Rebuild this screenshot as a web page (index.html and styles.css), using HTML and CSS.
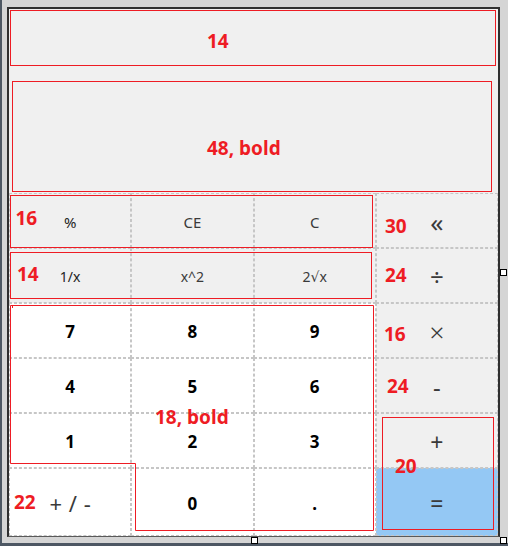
FILE: index.html
```html
<!DOCTYPE html>
<html>
<head>
<meta charset="utf-8">
<title>Calculator designer</title>
<link rel="stylesheet" href="styles.css">
</head>
<body>
<div class="screen">
  <div class="canvas">
    <div class="form">
      <div class="lbl lbl-expr">14</div>
      <div class="lbl lbl-result">48, bold</div>
      <div class="keys">
        <div class="key fn f16 dark">%</div>
        <div class="key fn f16">CE</div>
        <div class="key fn f16">C</div>
        <div class="key op back">«</div>

        <div class="key fn f14 dark">1/x</div>
        <div class="key fn f14">x^2</div>
        <div class="key fn f14">2√x</div>
        <div class="key op div">÷</div>

        <div class="key num">7</div>
        <div class="key num">8</div>
        <div class="key num">9</div>
        <div class="key op mul">×</div>

        <div class="key num">4</div>
        <div class="key num">5</div>
        <div class="key num">6</div>
        <div class="key op sub">-</div>

        <div class="key num">1</div>
        <div class="key num">2</div>
        <div class="key num">3</div>
        <div class="key op add">+</div>

        <div class="key sign">+ / -</div>
        <div class="key num">0</div>
        <div class="key num">.</div>
        <div class="key op eq">=</div>
      </div>
    </div>
  </div>
  <div class="bottom-bar"></div>

  <svg class="marks" width="508" height="546" viewBox="0 0 508 546">
    <rect x="10.5" y="195.5" width="362" height="52"/>
    <rect x="10.5" y="252.5" width="361" height="46"/>
    <path d="M10.5 305.5 H373.5 V530.5 H135.5 V463.5 H10.5 Z M12.5 305.5 V308"/>
    <rect x="382.5" y="417.5" width="111" height="112"/>
  </svg>

  <div class="ann a-r1">16</div>
  <div class="ann a-r2">14</div>
  <div class="ann a-back">30</div>
  <div class="ann a-div">24</div>
  <div class="ann a-mul">16</div>
  <div class="ann a-sub">24</div>
  <div class="ann a-num">18, bold</div>
  <div class="ann a-eq">20</div>
  <div class="ann a-sign">22</div>

  <div class="handle h-right"></div>
  <div class="handle h-bottom"></div>
  <div class="handle h-corner"></div>
</div>
</body>
</html>
```
FILE: styles.css
```css
* {
  box-sizing: border-box;
  margin: 0;
  padding: 0;
}

html, body {
  width: 508px;
  height: 546px;
  overflow: hidden;
}

body {
  background: #d5d5d5;
  font-family: "Noto Sans", "DejaVu Sans", sans-serif;
}

.screen {
  position: relative;
  width: 508px;
  height: 546px;
  display: flex;
  flex-direction: column;
  border-left: 2px solid #4d5763;
  background: #d5d5d5;
}

.canvas {
  flex: 1;
  padding: 7px 0 0 5px;
}

.form {
  width: 493px;
  height: 530px;
  background: #f0f0f0;
  border: 2px solid #2f2f2f;
  border-bottom: 1px solid #5a5a5a;
  display: flex;
  flex-direction: column;
}

.bottom-bar {
  height: 3px;
  background: #4d5763;
}

/* label controls (annotated) */
.lbl {
  border: 1px solid #ee1c24;
  color: #ee1c24;
  font-weight: bold;
  font-size: 19px;
  line-height: 20px;
  flex: none;
}

.lbl-expr {
  margin: 1px 0 0 1px;
  width: 486px;
  height: 56px;
  padding: 20px 0 0 196px;
}

.lbl-result {
  margin: 15px 0 1px 3px;
  width: 480px;
  height: 111px;
  padding: 56px 0 0 194px;
}

/* key grid */
.keys {
  flex: 1;
  display: grid;
  grid-template-columns: repeat(4, 1fr);
  grid-template-rows: repeat(5, 55px) 1fr;
}

.key {
  border: 1px dashed #c6c6c6;
  display: flex;
  align-items: center;
  justify-content: center;
  padding-top: 2px;
  background: #f0f0f0;
  color: #3a3a3a;
  white-space: nowrap;
}

.f16 { font-size: 15px; }
.f14 { font-size: 14px; }
.dark { color: #1e1e1e; }

.num {
  background: #ffffff;
  color: #000000;
  font-weight: bold;
  font-size: 17px;
}

.sign {
  background: #ffffff;
  font-size: 22px;
  word-spacing: 1px;
}

.back { font-size: 26px; }
.div { font-size: 24px; }
.mul { font-size: 26px; font-weight: 300; }
.sub { font-size: 24px; }
.add { font-size: 23px; }
.eq {
  font-size: 23px;
  background: #94c8f4;
}

/* annotation overlay */
.marks {
  position: absolute;
  left: -2px;
  top: 0;
  fill: none;
  stroke: #ee1c24;
  stroke-width: 1;
  pointer-events: none;
}

.ann {
  position: absolute;
  color: #ee1c24;
  font-weight: bold;
  font-size: 19px;
  line-height: 20px;
  white-space: nowrap;
}

.a-r1 { left: 13.5px; top: 208px; }
.a-r2 { left: 15px; top: 264px; }
.a-back { left: 383px; top: 215.5px; }
.a-div { left: 383px; top: 264.5px; }
.a-mul { left: 382px; top: 324px; }
.a-sub { left: 385px; top: 376px; }
.a-num { left: 153px; top: 407px; }
.a-eq { left: 393px; top: 456px; }
.a-sign { left: 12px; top: 492px; }

/* selection handles */
.handle {
  position: absolute;
  width: 7px;
  height: 7px;
  background: #ffffff;
  border: 1px solid #000000;
}

.h-right { left: 498px; top: 269px; }
.h-bottom { left: 249px; top: 537px; }
.h-corner { left: 498px; top: 537px; }
```
